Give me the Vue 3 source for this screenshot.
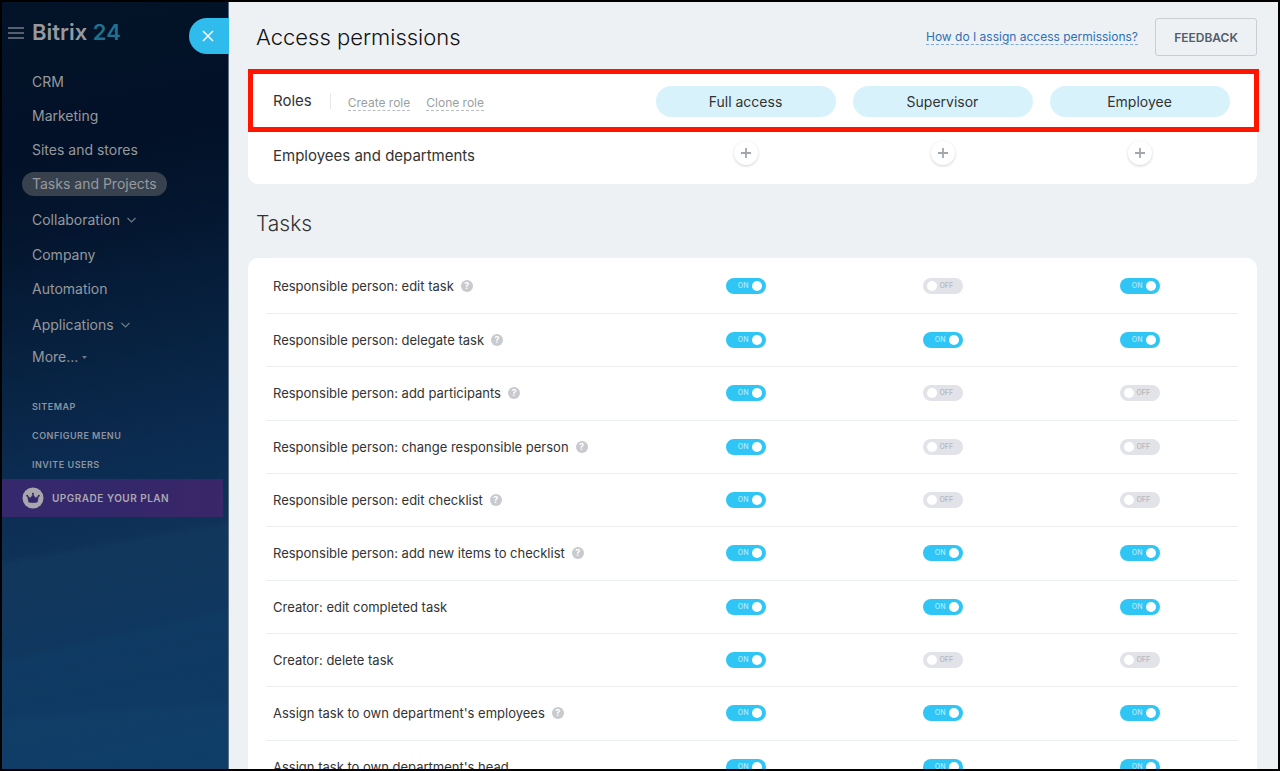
<script setup>
import { ref } from 'vue'

const menu = [
  { title: 'CRM' },
  { title: 'Marketing' },
  { title: 'Sites and stores' },
  { title: 'Tasks and Projects', active: true },
  { title: 'Collaboration', sub: true },
  { title: 'Company' },
  { title: 'Automation' },
  { title: 'Applications', sub: true }
]
const tools = ['Sitemap', 'Configure menu', 'Invite users']
const roles = ['Full access', 'Supervisor', 'Employee']

const permissions = ref([
  { title: 'Responsible person: edit task', hint: true, access: [true, false, true] },
  { title: 'Responsible person: delegate task', hint: true, access: [true, true, true] },
  { title: 'Responsible person: add participants', hint: true, access: [true, false, false] },
  { title: 'Responsible person: change responsible person', hint: true, access: [true, false, false] },
  { title: 'Responsible person: edit checklist', hint: true, access: [true, false, false] },
  { title: 'Responsible person: add new items to checklist', hint: true, access: [true, true, true] },
  { title: 'Creator: edit completed task', hint: false, access: [true, true, true] },
  { title: 'Creator: delete task', hint: false, access: [true, false, false] },
  { title: "Assign task to own department's employees", hint: true, access: [true, true, true] },
  { title: "Assign task to own department's head", hint: false, access: [true, true, true] }
])
</script>

<template>
  <div class="app">
    <aside class="sidebar">
      <header class="brand">
        <button class="burger" type="button" aria-label="Menu">
          <svg width="16" height="12" viewBox="0 0 16 12" fill="none" stroke="currentColor" stroke-width="1.5">
            <path d="M0 1h16M0 6h16M0 11h16" />
          </svg>
        </button>
        <a class="logo" href="#">Bitrix <span>24</span></a>
        <button class="close" type="button" aria-label="Close">
          <svg width="12" height="12" viewBox="0 0 12 12" fill="none" stroke="currentColor" stroke-width="1.5">
            <path d="M1 1l10 10M11 1L1 11" />
          </svg>
        </button>
      </header>

      <nav class="menu">
        <a v-for="item in menu" :key="item.title" href="#" class="item" :class="{ sub: item.sub }">
          <span class="pill" :class="{ active: item.active }">{{ item.title }}</span>
          <svg v-if="item.sub" width="9" height="6" viewBox="0 0 9 6" fill="none" stroke="currentColor" stroke-width="1.2">
            <path d="M.5 1l4 4 4-4" />
          </svg>
        </a>
        <a href="#" class="item more">
          <span class="pill">More...</span>
          <svg width="5" height="3" viewBox="0 0 5 3" fill="currentColor"><path d="M0 0h5L2.5 3z" /></svg>
        </a>
      </nav>

      <nav class="tools">
        <a v-for="tool in tools" :key="tool" href="#">{{ tool }}</a>
      </nav>

      <a class="upgrade" href="#">
        <svg width="22" height="22" viewBox="0 0 22 22">
          <circle cx="11" cy="11" r="10.5" fill="#aaa6ae" />
          <path
            d="M5.6 9.2l3 1.9L11 7.4l2.4 3.7 3-1.9-1.1 5.9q-4.3 1-8.6 0z"
            fill="#33286a"
            stroke="#33286a"
            stroke-width=".6"
            stroke-linejoin="round"
          />
          <g fill="#33286a">
            <circle cx="5.2" cy="8.8" r="1" />
            <circle cx="11" cy="6.8" r="1" />
            <circle cx="16.8" cy="8.8" r="1" />
          </g>
        </svg>
        Upgrade your plan
      </a>
    </aside>

    <main class="page">
      <header class="top">
        <h1>Access permissions</h1>
        <a class="help" href="#">How do I assign access permissions?</a>
        <button class="feedback" type="button">FEEDBACK</button>
      </header>

      <section class="card roles">
        <table>
          <colgroup>
            <col />
            <col v-for="role in roles" :key="role" class="role-col" />
          </colgroup>
          <thead>
            <tr>
              <th scope="col">
                <div class="roles-head">
                  <span class="roles-title">Roles</span>
                  <button class="role-action" type="button">Create role</button>
                  <button class="role-action" type="button">Clone role</button>
                </div>
              </th>
              <th v-for="role in roles" :key="role" scope="col">
                <button class="role" type="button">{{ role }}</button>
              </th>
            </tr>
          </thead>
          <tbody>
            <tr>
              <th scope="row">Employees and departments</th>
              <td v-for="role in roles" :key="role">
                <button class="add" type="button" :aria-label="`Add to ${role}`">
                  <svg width="10" height="10" viewBox="0 0 10 10" stroke="currentColor" stroke-width="1.8">
                    <path d="M0 5h10M5 0v10" />
                  </svg>
                </button>
              </td>
            </tr>
          </tbody>
        </table>
        <div class="highlight"></div>
      </section>

      <h2>Tasks</h2>

      <section class="card rights">
        <table>
          <colgroup>
            <col />
            <col v-for="role in roles" :key="role" class="role-col" />
          </colgroup>
          <tbody>
            <tr v-for="row in permissions" :key="row.title">
              <th scope="row">
                <div class="right-title">
                  {{ row.title }}
                  <button v-if="row.hint" class="hint" type="button" aria-label="Help">?</button>
                </div>
              </th>
              <td v-for="(role, i) in roles" :key="role">
                <label class="switch">
                  <input v-model="row.access[i]" type="checkbox" :aria-label="`${row.title}, ${role}`" />
                  <span :class="row.access[i] ? 'on' : 'off'">{{ row.access[i] ? 'ON' : 'OFF' }}</span>
                </label>
              </td>
            </tr>
          </tbody>
        </table>
      </section>
    </main>
  </div>
</template>

<style>
body {
  background: #000;
}
</style>

<style scoped>
* {
  box-sizing: border-box;
}

.app {
  display: flex;
  height: 100vh;
  overflow: hidden;
  border: 2px solid #000;
  font-family: Inter, "Liberation Sans", sans-serif;
  font-size: 13px;
  color: #333;
}

a {
  color: inherit;
  text-decoration: none;
}

button {
  padding: 0;
  border: 0;
  background: none;
  font: inherit;
  color: inherit;
  cursor: pointer;
}

svg {
  display: block;
  flex: none;
}

.sidebar {
  flex: none;
  width: 227px;
  border-right: 1px solid #5d7085;
  background:
    linear-gradient(176deg, transparent 91%, rgba(18, 72, 112, 0.25) 92%),
    linear-gradient(167deg, transparent 80%, rgba(14, 70, 112, 0.2) 81%, transparent 94%),
    linear-gradient(170deg, transparent 69%, rgba(32, 72, 108, 0.2) 70%, transparent 80%),
    linear-gradient(168deg, #031328 0%, #021127 20%, #04162f 30%, #07213f 44%, #0b2b50 58%, #10365d 76%, #0d3b66 100%);
  color: #96999e;
}

.brand {
  display: flex;
  align-items: flex-start;
  height: 63px;
  padding: 16px 0 0 6px;
}

.burger {
  padding-top: 9px;
  color: #737b86;
}

.logo {
  margin-left: 8px;
  font-size: 22px;
  font-weight: 600;
  line-height: 28px;
}

.logo span {
  color: #20708f;
}

.close {
  display: flex;
  align-items: center;
  width: 40px;
  height: 36px;
  margin: 0 -1px 0 auto;
  padding-left: 13px;
  border-radius: 18px 0 0 18px;
  background: #2fbcec;
  color: #fff;
}

.item {
  display: flex;
  align-items: center;
  height: 34px;
  padding-left: 20px;
  font-size: 14px;
}

.item.sub {
  height: 37px;
}

.item.more {
  height: 28px;
}

.item.more svg {
  margin-left: -6px;
}

.item svg {
  margin-left: -3px;
  color: #6f7986;
}

.pill {
  padding: 0 10px;
  border-radius: 12px;
  line-height: 24px;
}

.pill.active {
  background: #38424f;
}

.tools {
  display: flex;
  flex-direction: column;
  padding: 21px 0 0 30px;
  font-size: 9px;
  font-weight: 600;
  line-height: 29px;
  letter-spacing: 0.5px;
  text-transform: uppercase;
  color: #8c949f;
}

.upgrade {
  display: flex;
  align-items: center;
  gap: 8px;
  height: 38px;
  margin-right: 5px;
  padding-left: 20px;
  background: linear-gradient(90deg, #37286d, #33286a 50%, #3a2668);
  font-size: 10px;
  font-weight: 600;
  letter-spacing: 0.5px;
  text-transform: uppercase;
  color: #aba7b3;
}

.page {
  flex: 1;
  min-width: 0;
  padding: 16px 21px 0 19px;
  overflow: hidden;
  background: #edf1f4;
}

.top {
  display: flex;
  align-items: center;
  height: 38px;
  padding-left: 8px;
}

h1,
h2 {
  margin: 0;
  font-size: 22px;
  font-weight: 300;
  line-height: 32px;
}

h1 {
  flex: 1;
  color: #111;
}

h2 {
  padding: 24px 8px 18px;
  font-size: 21px;
}

.help {
  margin-right: 17px;
  border-bottom: 1px dashed #7fa9d6;
  font-size: 12px;
  line-height: 14px;
  color: #2f6fb7;
}

.feedback {
  width: 102px;
  height: 38px;
  border: 1px solid #c9ced3;
  border-radius: 3px;
  font-size: 12px;
  font-weight: 600;
  color: #535c69;
}

.card {
  position: relative;
  padding: 0 19px 0 18px;
  border-radius: 10px;
  background: #fff;
}

.roles {
  margin-top: 13px;
  padding-bottom: 1px;
}

.rights {
  padding-top: 2px;
}

table {
  width: 100%;
  border-collapse: collapse;
  table-layout: fixed;
}

.role-col {
  width: 197px;
}

th,
td {
  padding: 0;
  text-align: center;
}

th {
  font-weight: 400;
}

th:first-child {
  padding-left: 7px;
  text-align: left;
}

.roles thead tr {
  height: 64px;
}

.roles tbody tr {
  height: 50px;
}

.roles th {
  font-size: 14px;
}

.roles tbody th,
.roles-title {
  font-size: 15px;
}

.roles tbody th {
  padding-bottom: 6px;
}

.roles tbody td {
  padding-bottom: 10px;
}

.roles-head {
  display: flex;
  align-items: center;
}

.roles-title {
  margin-right: 17px;
  padding-right: 18px;
  border-right: 1px solid #e4e7ea;
  line-height: 16px;
}

.role-action {
  margin: 4px 16px 0 0;
  border-bottom: 1px dashed #b9bdc2;
  font-size: 12px;
  line-height: 15px;
  color: #9b9fa4;
}

.role {
  width: 180px;
  height: 31px;
  border-radius: 16px;
  background: #d8f2fc;
}

.add {
  display: inline-grid;
  place-items: center;
  width: 24px;
  height: 24px;
  border-radius: 50%;
  background: #fff;
  box-shadow: 0 1px 3px rgba(0, 0, 0, 0.18);
  color: #a2a7ae;
  vertical-align: middle;
}

.highlight {
  position: absolute;
  inset: 0 -2px auto 0;
  height: 63px;
  border: 5px solid #ff1400;
  pointer-events: none;
}

.rights tr {
  height: 53px;
  border-bottom: 1px solid #ebedee;
}

.rights tr:nth-child(3n) {
  height: 54px;
}

.rights td {
  padding-bottom: 1px;
}

.right-title {
  display: flex;
  align-items: center;
  gap: 7px;
}

.hint {
  width: 12px;
  height: 12px;
  border-radius: 50%;
  background: #c8cace;
  font-size: 9px;
  font-weight: 700;
  line-height: 12px;
  text-align: center;
  color: #fff;
}

.switch {
  display: inline-block;
  position: relative;
  height: 16px;
  vertical-align: middle;
  font-size: 7px;
  font-weight: 500;
  line-height: 16px;
}

.switch input {
  display: flex;
  align-items: center;
  width: 40px;
  height: 16px;
  margin: 0;
  padding: 0 4px;
  border-radius: 8px;
  background: #e1e3e8;
  appearance: none;
  cursor: pointer;
}

.switch input::before {
  content: "";
  width: 10px;
  height: 10px;
  border-radius: 50%;
  background: #fff;
}

.switch input:checked {
  justify-content: flex-end;
  background: #2fc6f6;
}

.switch span {
  position: absolute;
  top: 0;
  pointer-events: none;
}

.on {
  right: 17px;
  color: #b5eafb;
}

.off {
  left: 17px;
  color: #b4b7bc;
}
</style>
